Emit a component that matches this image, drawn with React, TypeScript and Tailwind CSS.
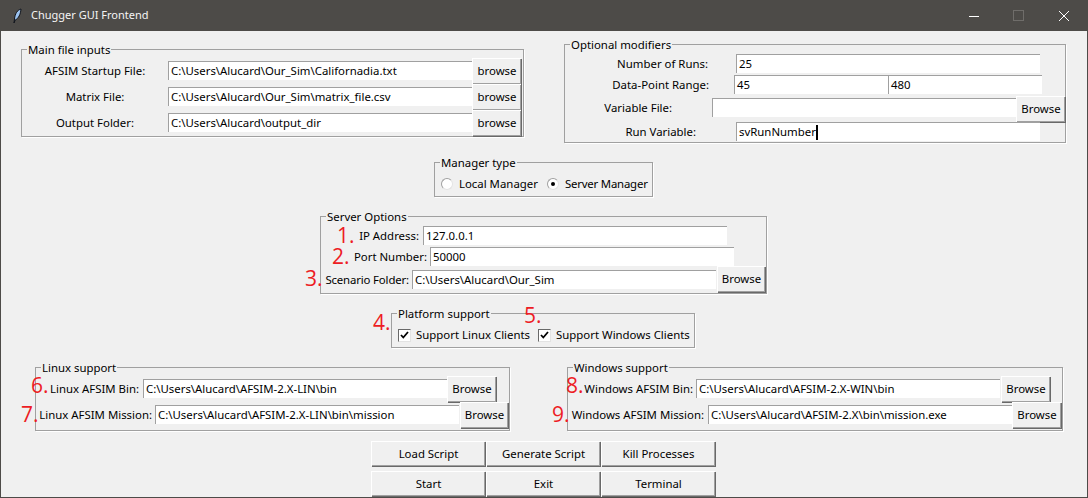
import type { ReactNode } from "react";

function Group({ title, className, children }: { title: string; className: string; children: ReactNode }) {
  return (
    <div className={`relative shrink-0 whitespace-nowrap border border-[#a0a0a0] shadow-[1px_1px_0_#ffffff] ${className}`}>
      <span className="absolute -top-[8px] left-[5px] bg-[#f0f0f0] px-px leading-[16px]">{title}</span>
      {children}
    </div>
  );
}

function Entry({ className, children }: { className: string; children?: ReactNode }) {
  return (
    <div className={`h-[19px] w-[304px] shrink-0 overflow-hidden whitespace-nowrap border-t border-l border-[#a0a0a0] bg-white pl-[2px] leading-[17px] ${className}`}>
      {children}
    </div>
  );
}

function Btn({ className, children }: { className: string; children: ReactNode }) {
  return (
    <div className={`flex shrink-0 items-center justify-center border-t border-l border-white bg-[#f0f0f0] pb-px shadow-[inset_-1px_-1px_0_#a0a0a0,1px_1px_0_#696969] ${className}`}>
      {children}
    </div>
  );
}

function Label({ className, children }: { className: string; children: ReactNode }) {
  return <span className={`shrink-0 whitespace-nowrap leading-[19px] ${className}`}>{children}</span>;
}

function Radio({ checked }: { checked?: boolean }) {
  return (
    <span className="flex h-[12px] w-[12px] shrink-0 items-center justify-center rounded-full border border-[#a0a0a0] border-r-[#e3e3e3] border-b-[#e3e3e3] bg-white">
      {checked && <span className="h-[4px] w-[4px] rounded-full bg-black" />}
    </span>
  );
}

function Check() {
  return (
    <span className="flex h-[13px] w-[13px] shrink-0 items-center justify-center border border-[#696969] border-r-[#e3e3e3] border-b-[#e3e3e3] bg-white">
      <svg width="9" height="9" viewBox="0 0 9 9">
        <path d="M1 4 L3.3 6.5 L8 1" fill="none" stroke="#000" strokeWidth="1.8" />
      </svg>
    </span>
  );
}

// red numbers painted over the screenshot
const marks = [
  { n: "1.", c: "left-[336px] top-[225px]" },
  { n: "2.", c: "left-[331px] top-[246px]" },
  { n: "3.", c: "left-[304px] top-[268px]" },
  { n: "4.", c: "left-[372px] top-[312px]" },
  { n: "5.", c: "left-[523px] top-[305px]" },
  { n: "6.", c: "left-[30px] top-[375px]" },
  { n: "7.", c: "left-[20px] top-[404px]" },
  { n: "8.", c: "left-[565px] top-[375px]" },
  { n: "9.", c: "left-[551px] top-[404px]" },
];

export default function App() {
  return (
    <div className="relative flex h-[498px] w-[1088px] flex-col overflow-hidden border-x border-b border-[#4d4b48] bg-[#f0f0f0] font-['Noto_Sans',sans-serif] text-[11.4px] text-black">
      {/* Title bar */}
      <div className="-mx-px flex h-[31px] shrink-0 items-center bg-[#4d4b48] text-[11px] text-[#f4f4f4]">
        <svg className="ml-[13px]" width="9" height="16" viewBox="0 0 9 16">
          <path d="M8 1 C4.5 2 2 5.5 1.5 11 L1 15 L2.2 12 C5.5 10.5 7.5 6.5 8 1 Z" fill="#9cc3f0" stroke="#10131a" strokeWidth="1" />
        </svg>
        <span className="ml-[9px]">Chugger GUI Frontend</span>
        <div className="ml-auto flex items-center">
          <svg width="12" height="12" viewBox="0 0 12 12">
            <path d="M1 6.5 H11" stroke="#ffffff" strokeWidth="1" />
          </svg>
          <svg className="ml-[33px]" width="11" height="11" viewBox="0 0 11 11">
            <rect x="0.5" y="0.5" width="10" height="10" fill="none" stroke="#6f6d6a" />
          </svg>
          <svg className="ml-[34px] mr-[18px]" width="12" height="12" viewBox="0 0 12 12">
            <path d="M1 1 L11 11 M11 1 L1 11" stroke="#ffffff" strokeWidth="1" />
          </svg>
        </div>
      </div>

      {/* Top groups */}
      <div className="flex h-[112px] shrink-0 items-start">
        <Group title="Main file inputs" className="ml-[20px] mt-[18px] h-[88px] w-[503px] pt-[8px]">
          {[
            ["AFSIM Startup File:", "C:\\Users\\Alucard\\Our_Sim\\Californadia.txt"],
            ["Matrix File:", "C:\\Users\\Alucard\\Our_Sim\\matrix_file.csv"],
            ["Output Folder:", "C:\\Users\\Alucard\\output_dir"],
          ].map(([label, value]) => (
            <div key={label} className="flex h-[26px] items-start">
              <Label className="mt-[3px] w-[146px] text-center">{label}</Label>
              <Entry className="mt-[3px]">{value}</Entry>
              <Btn className="h-[26px] w-[49px]">browse</Btn>
            </div>
          ))}
        </Group>

        <Group title="Optional modifiers" className="ml-[40px] mt-[13px] h-[99px] w-[502px] pt-[9px]">
          <div className="flex h-[21px] items-start">
            <Label className="w-[143px] text-right">Number of Runs:</Label>
            <Entry className="ml-[28px]">25</Entry>
          </div>
          <div className="flex h-[21px] items-start">
            <Label className="w-[144px] text-right">Data-Point Range:</Label>
            <Entry className="ml-[25px] !w-[154px]">45</Entry>
            <Entry className="!w-[154px]">480</Entry>
          </div>
          <div className="flex h-[26px] items-start">
            <Label className="mt-[2px] w-[107px] text-right">Variable File:</Label>
            <Entry className="ml-[40px] mt-[2px]" />
            <Btn className="h-[26px] w-[49px]">Browse</Btn>
          </div>
          <div className="flex h-[19px] items-start">
            <Label className="w-[131px] text-right">Run Variable:</Label>
            <Entry className="ml-[40px]">
              svRunNumber<span className="inline-block h-[15px] w-[2px] bg-black align-middle" />
            </Entry>
          </div>
        </Group>
      </div>

      {/* Manager type */}
      <Group title="Manager type" className="ml-[433px] mt-[19px] flex h-[35px] w-[219px] items-center pl-[6px] pt-[9px]">
        <Radio />
        <span className="ml-[6px]">Local Manager</span>
        <span className="ml-[9px]"><Radio checked /></span>
        <span className="ml-[6px] tracking-[-0.2px]">Server Manager</span>
      </Group>

      {/* Server options */}
      <Group title="Server Options" className="ml-[319px] mt-[19px] h-[78px] w-[447px] pt-[9px]">
        <div className="flex h-[21px] items-start">
          <Label className="w-[98px] text-right">IP Address:</Label>
          <Entry className="ml-[4px]">127.0.0.1</Entry>
        </div>
        <div className="flex h-[19px] items-start">
          <Label className="w-[106px] text-right">Port Number:</Label>
          <Entry className="ml-[3px]">50000</Entry>
        </div>
        <div className="flex h-[27px] items-start">
          <Label className="mt-[4px] w-[88px] text-right tracking-[-0.15px]">Scenario Folder:</Label>
          <Entry className="ml-[3px] mt-[4px]">C:\Users\Alucard\Our_Sim</Entry>
          <Btn className="ml-px h-[26px] w-[48px]">Browse</Btn>
        </div>
      </Group>

      {/* Platform support */}
      <Group title="Platform support" className="ml-[390px] mt-[19px] flex h-[35px] w-[304px] items-center pl-[6px] pt-[9px]">
        <Check />
        <span className="ml-[5px]">Support Linux Clients</span>
        <span className="ml-[8px]"><Check /></span>
        <span className="ml-[5px]">Support Windows Clients</span>
      </Group>

      {/* Linux / Windows support */}
      <div className="mt-[19px] flex h-[64px] shrink-0 items-start">
        <Group title="Linux support" className="ml-[34px] h-[64px] w-[475px] pt-[8px]">
          <div className="flex h-[26px] items-start">
            <Label className="mt-[3px] w-[103px] text-right">Linux AFSIM Bin:</Label>
            <Entry className="ml-[4px] mt-[3px]">C:\Users\Alucard\AFSIM-2.X-LIN\bin</Entry>
            <Btn className="h-[26px] w-[49px]">Browse</Btn>
          </div>
          <div className="flex h-[26px] items-start">
            <Label className="mt-[3px] w-[116px] text-right">Linux AFSIM Mission:</Label>
            <Entry className="ml-[3px] mt-[3px]">C:\Users\Alucard\AFSIM-2.X-LIN\bin\mission</Entry>
            <Btn className="ml-px h-[26px] w-[48px]">Browse</Btn>
          </div>
        </Group>

        <Group title="Windows support" className="ml-[57px] h-[64px] w-[496px] pt-[8px]">
          <div className="flex h-[26px] items-start">
            <Label className="mt-[3px] w-[125px] text-right">Windows AFSIM Bin:</Label>
            <Entry className="ml-[3px] mt-[3px]">C:\Users\Alucard\AFSIM-2.X-WIN\bin</Entry>
            <Btn className="ml-px h-[26px] w-[49px]">Browse</Btn>
          </div>
          <div className="flex h-[26px] items-start">
            <Label className="mt-[3px] w-[136px] text-right">Windows AFSIM Mission:</Label>
            <Entry className="ml-[4px] mt-[3px]">C:\Users\Alucard\AFSIM-2.X\bin\mission.exe</Entry>
            <Btn className="h-[26px] w-[49px]">Browse</Btn>
          </div>
        </Group>
      </div>

      {/* Bottom buttons */}
      <div className="ml-[370px] mt-[10px] grid grid-cols-[115px_115px_115px] gap-y-[5px]">
        {["Load Script", "Generate Script", "Kill Processes", "Start", "Exit", "Terminal"].map((label) => (
          <Btn key={label} className="h-[25px] w-[114px]">{label}</Btn>
        ))}
      </div>

      {marks.map((m) => (
        <span key={m.n} className={`absolute font-['Open_Sans',sans-serif] text-[21px] leading-[20px] text-[#ed1c24] ${m.c}`}>
          {m.n}
        </span>
      ))}
    </div>
  );
}
